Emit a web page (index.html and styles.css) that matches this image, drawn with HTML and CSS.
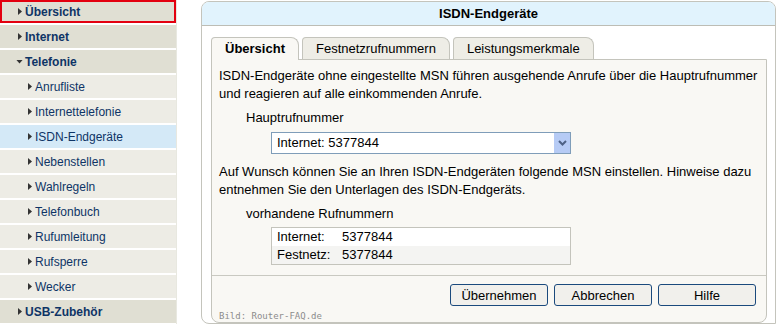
FILE: index.html
```html
<!DOCTYPE html>
<html lang="de">
<head>
  <meta charset="UTF-8">
  <title>ISDN-Endgeräte</title>
  <link rel="stylesheet" href="styles.css">
</head>
<body>
  <div class="page">
    <nav class="menu">
      <a class="menu-item top current">Übersicht</a>
      <a class="menu-item top">Internet</a>
      <a class="menu-item top open">Telefonie</a>
      <a class="menu-item">Anrufliste</a>
      <a class="menu-item">Internettelefonie</a>
      <a class="menu-item selected">ISDN-Endgeräte</a>
      <a class="menu-item">Nebenstellen</a>
      <a class="menu-item">Wahlregeln</a>
      <a class="menu-item">Telefonbuch</a>
      <a class="menu-item">Rufumleitung</a>
      <a class="menu-item">Rufsperre</a>
      <a class="menu-item">Wecker</a>
      <a class="menu-item top">USB-Zubehör</a>
    </nav>

    <div class="panel">
      <div class="panel-head">ISDN-Endgeräte</div>
      <div class="panel-body">
        <div class="tabs">
          <div class="tab active">Übersicht</div>
          <div class="tab">Festnetzrufnummern</div>
          <div class="tab">Leistungsmerkmale</div>
        </div>

        <div class="tab-box">
          <div class="tab-content">
            <p>ISDN-Endgeräte ohne eingestellte MSN führen ausgehende Anrufe über die Hauptrufnummer und reagieren auf alle einkommenden Anrufe.</p>

            <div class="field-label">Hauptrufnummer</div>
            <div class="select">
              <span>Internet: 5377844</span>
              <span class="select-btn">
                <svg width="9" height="6" viewBox="0 0 9 6"><polyline points="1,1 4.5,4.5 8,1" fill="none" stroke="#4d6185" stroke-width="2"/></svg>
              </span>
            </div>

            <p class="gap">Auf Wunsch können Sie an Ihren ISDN-Endgeräten folgende MSN einstellen. Hinweise dazu entnehmen Sie den Unterlagen des ISDN-Endgeräts.</p>

            <div class="field-label">vorhandene Rufnummern</div>
            <div class="numbers">
              <div class="num-row"><span class="num-label">Internet:</span><span>5377844</span></div>
              <div class="num-row"><span class="num-label">Festnetz:</span><span>5377844</span></div>
            </div>
          </div>

          <div class="tab-foot">
            <div class="actions">
              <button type="button">Übernehmen</button>
              <button type="button">Abbrechen</button>
              <button type="button">Hilfe</button>
            </div>
            <div class="credit">Bild: Router-FAQ.de</div>
          </div>
        </div>
      </div>
    </div>
  </div>
</body>
</html>
```

FILE: styles.css
```css
* {
  box-sizing: border-box;
}

body {
  margin: 0;
  background: #ffffff;
  font-family: "Liberation Sans", Arial, sans-serif;
  color: #000;
}

.page {
  display: flex;
  align-items: flex-start;
}

/* left menu */
.menu {
  width: 177px;
  border-right: 1px solid #e8e8e0;
}

.menu-item {
  display: flex;
  align-items: center;
  height: 23px;
  margin-bottom: 2px;
  padding-left: 28px;
  background: #edece5;
  color: #0e3466;
  font-size: 12px;
}

.menu-item::before {
  content: "";
  width: 4px;
  height: 7px;
  margin-right: 3px;
  background: #333;
  clip-path: polygon(0 0, 100% 50%, 0 100%);
}

.menu-item.top {
  padding-left: 18px;
  background: #e0dfd3;
  font-weight: bold;
}

.menu-item.open::before {
  width: 7px;
  height: 4px;
  margin-left: -2px;
  margin-right: 2px;
  clip-path: polygon(0 0, 100% 0, 50% 100%);
}

.menu-item.current {
  outline: 2px solid #e3000f;
  outline-offset: -2px;
}

.menu-item.selected {
  background: #d4e9f7;
}

/* main panel */
.panel {
  width: 575px;
  height: 323px;
  margin: 1px 0 0 24px;
  border: 1px solid #c4c4bc;
  border-radius: 8px 8px 0 8px;
  overflow: hidden;
}

.panel-head {
  height: 24px;
  line-height: 23px;
  background: #e1f3fd;
  border-bottom: 1px solid #bdbdb5;
  text-align: center;
  font-size: 13px;
  font-weight: bold;
}

.panel-body {
  padding: 11px 8px 0 9px;
}

.tabs {
  display: flex;
  align-items: flex-end;
  height: 22px;
}

.tab {
  height: 22px;
  margin-right: 3px;
  padding: 0 13px;
  line-height: 21px;
  font-size: 13px;
  background: #eeede6;
  border: 1px solid #c4c4bc;
  border-bottom: none;
  border-radius: 4px 8px 0 0;
}

.tab.active {
  position: relative;
  height: 23px;
  margin-bottom: -1px;
  padding-bottom: 1px;
  background: #f9f8f4;
  font-weight: bold;
}

.tab-box {
  background: #f9f8f4;
  border: 1px solid #c4c4bc;
  border-radius: 0 0 8px 8px;
}

.tab-content {
  padding: 7px 7px 10px 7px;
  font-size: 13px;
  line-height: 18px;
}

.tab-content p {
  margin: 0;
}

.tab-content p.gap {
  margin-top: 9px;
}

.field-label {
  margin: 6px 0 0 27px;
}

.select {
  display: flex;
  align-items: center;
  justify-content: space-between;
  width: 300px;
  height: 22px;
  margin: 5px 0 0 52px;
  padding-left: 5px;
  background: #fff;
  border: 1px solid #7f9db9;
}

.select-btn {
  display: flex;
  align-items: center;
  justify-content: center;
  width: 16px;
  height: 20px;
  background: #b6cbf5;
}

.numbers {
  width: 300px;
  margin: 4px 0 0 52px;
  background: #fff;
  border: 1px solid #c4c4bc;
}

.num-row {
  display: flex;
  height: 18px;
  line-height: 18px;
  padding-left: 5px;
}

.num-row + .num-row {
  background: #f4f4f2;
}

.num-label {
  width: 65px;
}

.tab-foot {
  padding: 8px 10px 1px 7px;
  border-top: 1px solid #c9c9c1;
}

.actions {
  display: flex;
  justify-content: flex-end;
  gap: 6px;
}

button {
  width: 98px;
  height: 22px;
  padding: 0;
  background: #f1f0ec;
  border: 1px solid #1b4a7d;
  border-radius: 3px;
  font-family: "Liberation Sans", Arial, sans-serif;
  font-size: 13px;
  color: #000;
}

.credit {
  margin-top: 5px;
  font-family: "DejaVu Sans Mono", monospace;
  font-size: 9px;
  line-height: 10px;
  color: #8c8c8c;
}
```
